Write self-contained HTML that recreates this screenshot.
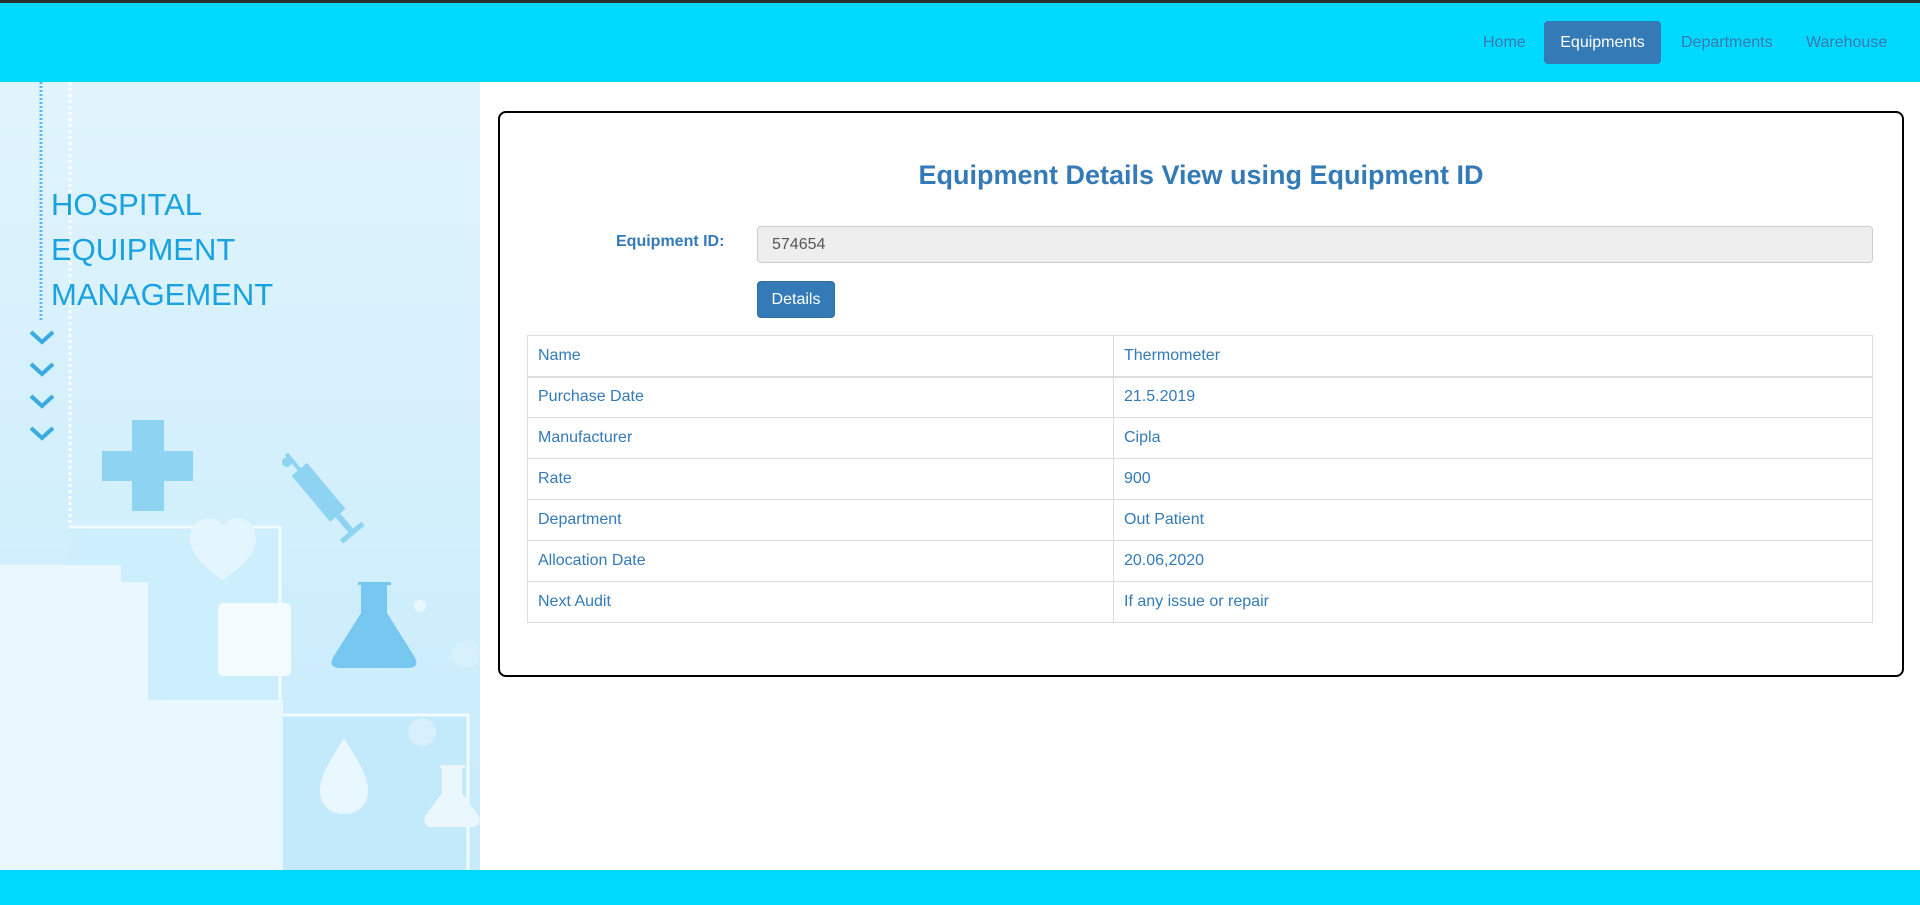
<!DOCTYPE html>
<html><head><meta charset="utf-8"><style>
*{box-sizing:border-box;margin:0;padding:0}
body{width:1920px;height:905px;overflow:hidden;background:#fff;font-family:"Liberation Sans",Arial,sans-serif;position:relative}
.top{position:absolute;left:0;top:0;width:1920px;height:3px;background:#2b2f33}
.nav{position:absolute;left:0;top:3px;width:1920px;height:79px;background:#00d9ff}
.nav a{position:absolute;top:18px;height:43px;line-height:43px;font-size:16px;color:#3a7ab0;text-decoration:none}
.nav a.act{background:#337ab7;color:#fff;border-radius:4px;padding:0 17px}
.foot{position:absolute;left:0;top:870px;width:1920px;height:35px;background:#00d9ff}
.side{position:absolute;left:0;top:82px;width:480px;height:788px}
.card{position:absolute;left:498px;top:111px;width:1406px;height:566px;border:2px solid #000;border-radius:8px}
h1{position:absolute;left:0;right:0;top:160px;text-align:center;font-size:27px;font-weight:bold;color:#337ab7}
.lbl{position:absolute;left:616px;top:233px;font-size:16px;font-weight:bold;color:#337ab7}
.inp{position:absolute;left:757px;top:226px;width:1116px;height:37px;background:#eee;border:1px solid #ccc;border-radius:4px;font-size:16px;color:#555;padding:0 0 0 14px;line-height:35px}
.btn{position:absolute;left:757px;top:281px;width:78px;height:37px;background:#337ab7;border:1px solid #2e6da4;border-radius:4px;color:#fff;font-size:16px;text-align:center;line-height:35px}
table{position:absolute;left:527px;top:335px;width:1346px;border-collapse:collapse;font-size:16px;color:#337ab7}
td{border:1px solid #ddd;height:41px;padding:0 10px;vertical-align:middle}
td:first-child{width:586px}
tr:first-child td{border-bottom:2px solid #ddd}
</style></head><body>
<div class="top"></div>
<div class="nav">
<a style="left:1483px">Home</a>
<a class="act" style="left:1544px;width:117px;text-align:center;padding:0">Equipments</a>
<a style="left:1681px">Departments</a>
<a style="left:1806px">Warehouse</a>
</div>
<div class="side">
<svg width="480" height="788" viewBox="0 82 480 788" xmlns="http://www.w3.org/2000/svg">
<defs><linearGradient id="g" x1="0" y1="0" x2="0" y2="1"><stop offset="0" stop-color="#e0f4fd"/><stop offset="1" stop-color="#c6ebfb"/></linearGradient></defs>
<rect x="0" y="82" width="480" height="788" fill="url(#g)"/>
<rect x="70" y="527" width="210" height="188" fill="#cdeefc"/>
<rect x="280" y="715" width="188" height="155" fill="#c3eafb"/>
<path d="M70 527H280V715H468V870" fill="none" stroke="#f2fbff" stroke-width="3"/>
<line x1="70" y1="82" x2="70" y2="527" stroke="#fff" stroke-width="3" stroke-dasharray="3 3"/>
<line x1="41" y1="82" x2="41" y2="321" stroke="#5bb8ea" stroke-width="3" stroke-dasharray="2 2"/>
<g fill="none" stroke="#3aaae3" stroke-width="4">
<path d="M31 332l11 10 11-10"/><path d="M31 364l11 10 11-10"/><path d="M31 396l11 10 11-10"/><path d="M31 428l11 10 11-10"/></g>
<path d="M132 420h32v31h29v30h-29v30h-32v-30h-30v-30h30z" fill="#8fd3f3"/>
<g transform="translate(325 500) rotate(50)" fill="#8fd3f3"><rect x="-40" y="-10" width="60" height="20"/><rect x="20" y="-3" width="22" height="6"/><rect x="40" y="-14" width="5" height="28"/><rect x="-60" y="-2" width="22" height="4"/></g>
<circle cx="287" cy="462" r="5" fill="#8fd3f3"/>
<path d="M223 580c-20-14-33-26-33-42 0-12 9-20 19-20 7 0 11 4 14 8 3-4 7-8 14-8 10 0 19 8 19 20 0 16-13 28-33 42z" fill="#e3f5fd"/>
<rect x="0" y="565" width="121" height="305" fill="#e8f8fe"/>
<rect x="0" y="582" width="148" height="288" fill="#e8f8fe"/>
<rect x="0" y="700" width="283" height="170" fill="#e9f8fe"/>
<rect x="218" y="603" width="73" height="73" rx="5" fill="#f3fbff"/>
<path d="M358 582h33v3h-4v28l27 43c5 8 2 12-6 12h-68c-8 0-11-4-6-12l27-43v-28h-3z" fill="#76c8f0"/>
<circle cx="420" cy="606" r="6" fill="#e8f8fe"/>
<circle cx="466" cy="654" r="14" fill="#d6f1fc"/>
<circle cx="422" cy="732" r="14" fill="#d6f1fc"/>
<path d="M344 738c-12 20-24 36-24 53 0 14 10 23 24 23s24-9 24-23c0-17-12-33-24-53z" fill="#e8f8fe"/>
<path d="M441 765h24v3h-3v25l16 22c4 7 0 12-6 12h-40c-6 0-10-5-6-12l16-22v-25h-2z" fill="#eaf8fe"/>
<text font-family="Liberation Sans,sans-serif" font-size="31" fill="#19a1e0"><tspan x="51" y="215">HOSPITAL</tspan><tspan x="51" y="260">EQUIPMENT</tspan><tspan x="51" y="305">MANAGEMENT</tspan></text>
</svg>
</div>
<div class="card"></div>
<h1 style="left:498px;width:1406px">Equipment Details View using Equipment ID</h1>
<div class="lbl">Equipment ID:</div>
<div class="inp">574654</div>
<div class="btn">Details</div>
<table>
<tr><td>Name</td><td>Thermometer</td></tr>
<tr><td>Purchase Date</td><td>21.5.2019</td></tr>
<tr><td>Manufacturer</td><td>Cipla</td></tr>
<tr><td>Rate</td><td>900</td></tr>
<tr><td>Department</td><td>Out Patient</td></tr>
<tr><td>Allocation Date</td><td>20.06,2020</td></tr>
<tr><td>Next Audit</td><td>If any issue or repair</td></tr>
</table>
<div class="foot"></div>
</body></html>
